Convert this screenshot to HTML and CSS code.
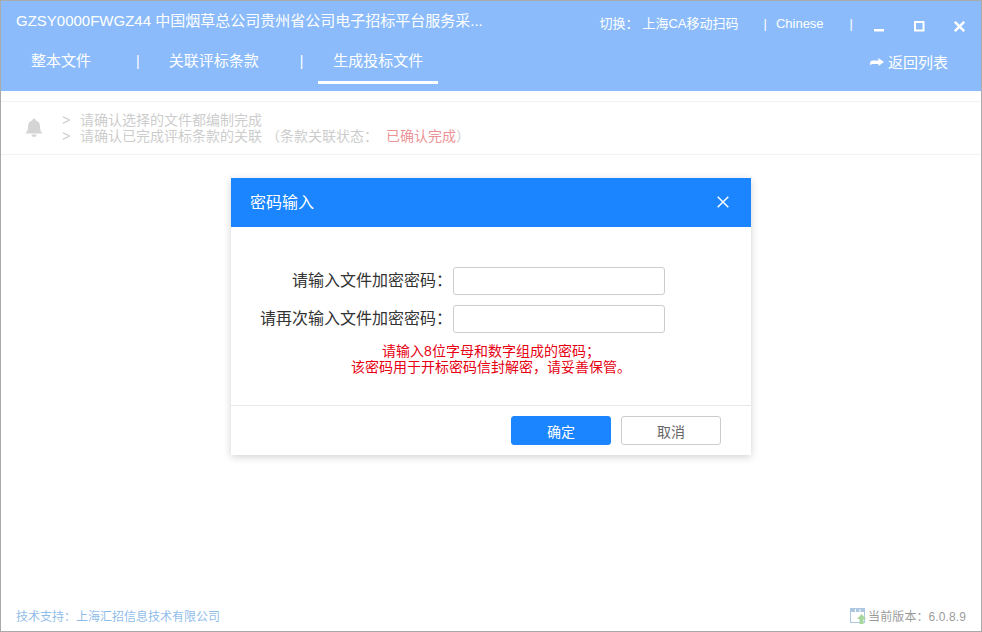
FILE: index.html
```html
<!DOCTYPE html>
<html lang="zh-CN">
<head>
<meta charset="utf-8">
<title>密码输入</title>
<link rel="stylesheet" href="styles.css">
</head>
<body>
<div class="window">
  <header class="appbar">
    <div class="titlerow">
      <div class="doc-title">GZSY0000FWGZ44 中国烟草总公司贵州省公司电子招标平台服务采...</div>
      <div class="tools">
        <span class="tool-label">切换：</span>
        <span class="tool-link">上海CA移动扫码</span>
        <span class="tool-sep">|</span>
        <span class="tool-lang">Chinese</span>
        <span class="tool-sep tool-sep-last">|</span>
        <div class="winbtns">
          <svg class="winbtn" width="11" height="11" viewBox="0 0 11 11"><rect x="0" y="8" width="10" height="2.500" fill="#fff"/></svg>
          <svg class="winbtn" width="11" height="11" viewBox="0 0 11 11"><rect x="1" y="1" width="8.500" height="8.500" fill="none" stroke="#fff" stroke-width="2"/></svg>
          <svg class="winbtn" width="11" height="11" viewBox="0 0 11 11"><path d="M.8.800l9.400 9.400M10.200.800L.8 10.200" stroke="#fff" stroke-width="2.400" fill="none"/></svg>
        </div>
      </div>
    </div>
    <div class="navrow">
      <nav class="tabs">
        <a class="tab">整本文件</a>
        <span class="nav-sep nav-sep-a">|</span>
        <a class="tab">关联评标条款</a>
        <span class="nav-sep nav-sep-b">|</span>
        <a class="tab tab-active">生成投标文件</a>
      </nav>
      <a class="back">
        <svg class="back-icon" width="14" height="9" viewBox="0 0 14 9"><path d="M0 5.500C0 3.500 1 2.500 3 2.500H8.500V0L14 4 8.500 8V6H3C1.500 6 .8 6.500 .3 7.500 .1 7 0 6.300 0 5.500z" fill="#fff"/></svg>
        <span>返回列表</span>
      </a>
    </div>
  </header>

  <section class="notice">
    <svg class="bell" width="20" height="20" viewBox="0 0 20 20"><path d="M10 0.500a1.600 1.600 0 0 1 1.600 1.700C14.600 3 16 5.400 16 8.500c0 3.500.8 5.300 2.600 7H1.400C3.200 13.800 4 12 4 8.500c0-3.100 1.400-5.500 4.400-6.300A1.600 1.600 0 0 1 10 .5zM7.500 16.500h5a2.500 2.500 0 0 1-5 0z" fill="#aaa"/></svg>
    <div class="notice-marks"><div>&gt;</div><div>&gt;</div></div>
    <div class="notice-text">
      <div>请确认选择的文件都编制完成</div>
      <div>请确认已完成评标条款的关联 <span class="status">（条款关联状态：</span><span class="status-ok">已确认完成</span><span class="status">）</span></div>
    </div>
  </section>

  <footer class="statusbar">
    <div class="support">技术支持：上海汇招信息技术有限公司</div>
    <div class="version">
      <svg class="version-icon" width="17" height="17" viewBox="0 0 17 17"><rect x="0.500" y="0.500" width="14" height="14" fill="#fff" stroke="#5c8fc0"/><rect x="1" y="1" width="13" height="3" fill="#5c8fc0"/><path d="M5.500 1v3M10 1v3" stroke="#fff"/><path d="M11.500 6l4.500 5h-2.500v5h-4v-5H7z" fill="#4caf3c"/></svg>
      <span class="version-text">当前版本：6.0.8.9</span>
    </div>
  </footer>
</div>

<div class="mask"></div>

<div class="dialog" role="dialog">
  <div class="dialog-head">
    <span class="dialog-title">密码输入</span>
    <svg width="12" height="12" viewBox="0 0 12 12"><path d="M.7.700l10.600 10.600M11.300.700L.7 11.300" stroke="#fff" stroke-width="1.500" fill="none"/></svg>
  </div>
  <div class="dialog-body">
    <div class="form">
      <label class="form-label">请输入文件加密密码：</label>
      <input class="form-input" type="password">
      <label class="form-label">请再次输入文件加密密码：</label>
      <input class="form-input" type="password">
    </div>
    <p class="hint">请输入8位字母和数字组成的密码；<br>该密码用于开标密码信封解密，请妥善保管。</p>
  </div>
  <div class="dialog-foot">
    <button class="btn btn-primary" type="button">确定</button>
    <button class="btn" type="button">取消</button>
  </div>
</div>
</body>
</html>
```
FILE: styles.css
```css
* { box-sizing: border-box; }
html, body { margin: 0; height: 100%; }
body {
  position: relative;
  width: 982px;
  height: 632px;
  overflow: hidden;
  background: #fff;
  font-family: "Liberation Sans", "Noto Sans CJK SC", sans-serif;
  color: #333;
}
.window {
  display: flex;
  flex-direction: column;
  height: 632px;
  border: 1px solid #555;
  background: #fff;
}
.appbar {
  height: 90px;
  flex: none;
  background: #1677f7;
  color: #fff;
}
.titlerow {
  display: flex;
  justify-content: space-between;
  height: 45px;
}
.doc-title {
  margin: 11px 0 0 15px;
  font-size: 15px;
  line-height: 18px;
  white-space: nowrap;
}
.tools {
  display: flex;
  align-items: flex-start;
  padding-top: 15px;
  font-size: 13px;
  line-height: 16px;
}
.tool-link { margin-left: 4px; }
.tool-sep { margin: 0 9px 0 25px; }
.tool-sep-last { margin: 0 0 0 26px; }
.winbtns {
  display: flex;
  gap: 29px;
  margin: 5px 16px 0 21px;
}
.navrow {
  display: flex;
  justify-content: space-between;
  height: 45px;
}
.tabs {
  display: flex;
  align-items: flex-start;
  padding-left: 15px;
  font-size: 15px;
  line-height: 20px;
}
.tab {
  height: 38px;
  padding: 5px 15px 0;
}
.tab-active { border-bottom: 3px solid #fff; }
.nav-sep { padding-top: 5px; font-size: 14px; }
.nav-sep-a { margin: 0 14px 0 30px; }
.nav-sep-b { margin: 0 15px 0 26px; }
.back {
  display: flex;
  align-items: center;
  gap: 4px;
  height: 30px;
  margin-right: 33px;
  font-size: 15px;
}
.back-icon { margin-top: 2px; }
.notice {
  display: flex;
  align-items: center;
  height: 54px;
  margin-top: 10px;
  flex: none;
  padding-left: 23px;
  border-top: 1px solid #e4e4e4;
  border-bottom: 1px solid #e4e4e4;
  font-size: 14px;
  line-height: 16px;
  color: #999;
}
.notice-marks { margin-left: 18px; width: 18px; }
.status-ok { margin-left: 8px; color: #d8232a; }
.statusbar {
  display: flex;
  justify-content: space-between;
  align-items: center;
  margin-top: auto;
  height: 32px;
  padding: 0 15px;
  font-size: 12px;
  flex: none;
}
.support { color: #1677d2; }
.version { display: flex; align-items: center; gap: 1px; color: #333; }
.version-icon { margin-top: 2px; }
.version-text { letter-spacing: .1px; }
.mask {
  position: absolute;
  inset: 0;
  background: rgba(255, 255, 255, .5);
}
.dialog {
  position: absolute;
  left: 231px;
  top: 178px;
  width: 520px;
  height: 277px;
  display: flex;
  flex-direction: column;
  background: #fff;
  box-shadow: 0 2px 8px rgba(0, 0, 0, .18);
}
.dialog-head {
  display: flex;
  justify-content: space-between;
  align-items: center;
  height: 49px;
  flex: none;
  padding: 0 22px 2px 20px;
  background: #1a85ff;
  color: #fff;
}
.dialog-title { font-size: 16px; margin-left: -1px; margin-top: -2px; }
.dialog-body { flex: 1; padding-top: 40px; }
.form {
  display: grid;
  grid-template-columns: 222px 212px;
  row-gap: 10px;
  align-items: center;
}
.form-label {
  margin-right: 1px;
  font-size: 16px;
  line-height: 28px;
  text-align: right;
  white-space: nowrap;
  color: #333;
}
.form-input {
  width: 212px;
  height: 28px;
  padding: 0 8px;
  border: 1px solid #ccc;
  border-radius: 3px;
  background: #fff;
}
.hint {
  margin: 10px 0 0;
  font-size: 14px;
  line-height: 16px;
  text-align: center;
  color: #e60012;
}
.dialog-foot {
  display: flex;
  justify-content: flex-end;
  gap: 10px;
  height: 50px;
  flex: none;
  padding: 10px 30px;
  border-top: 1px solid #e8e8e8;
}
.btn {
  width: 100px;
  height: 29px;
  padding: 0;
  border: 1px solid #ccc;
  border-radius: 3px;
  background: #fff;
  font-family: inherit;
  font-size: 14px;
  color: #666;
}
.btn-primary {
  border-color: #1a85ff;
  background: #1a85ff;
  color: #fff;
}
```
